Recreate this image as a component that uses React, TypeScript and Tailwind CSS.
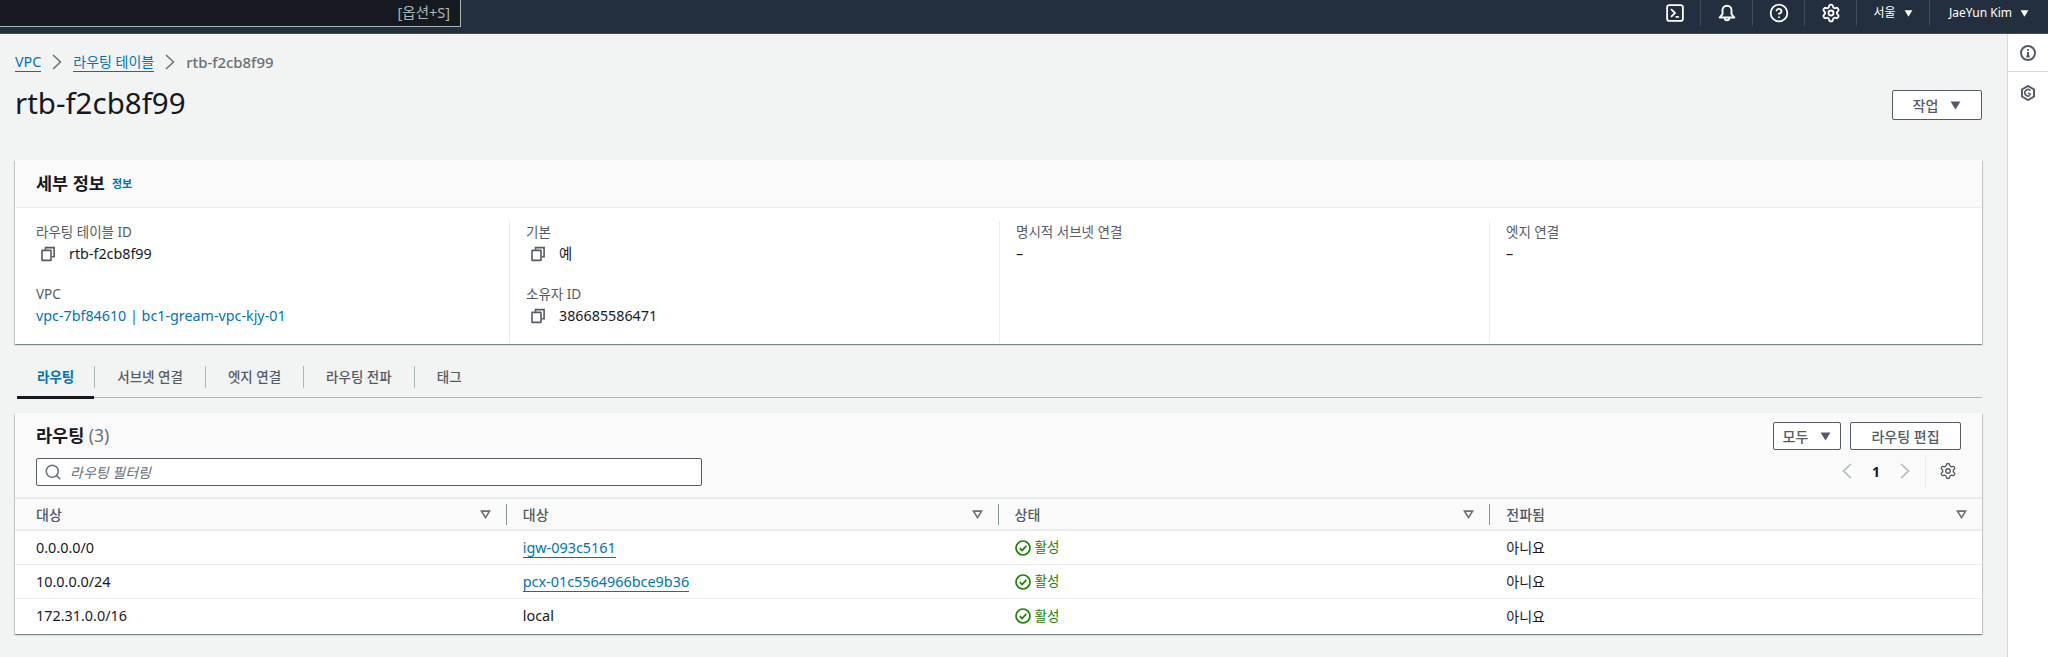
import React from 'react';
import { CircleHelp, Search, Settings } from 'lucide-react';

const Caret = ({ className }: { className: string }) => (
  <svg viewBox="0 0 12 10" className={className} fill="currentColor">
    <path d="M0.5 0.5h11L6 9.5z" />
  </svg>
);

const SortCaret = () => (
  <svg viewBox="0 0 12 10" className="w-[11px] h-[9px] text-[#687078]" fill="none" stroke="currentColor" strokeWidth="1.8">
    <path d="M1.5 1.2h9L6 8.4z" />
  </svg>
);

const Chevron = ({ left, className }: { left?: boolean; className: string }) => (
  <svg viewBox="0 0 10 16" className={className} fill="none" stroke="currentColor" strokeWidth="1.5">
    <path d={left ? 'M9 1L1.5 8 9 15' : 'M1 1l7.5 7L1 15'} />
  </svg>
);

const CopyIcon = () => (
  <svg viewBox="0 0 16 16" className="w-4 h-4 text-[#545b64]" fill="none" stroke="currentColor" strokeWidth="1.6">
    <path d="M5.5 3.8V1.6h8.6v9.2h-2.2" />
    <rect x="2" y="4.4" width="9" height="10" rx="0.5" />
  </svg>
);

const CheckIcon = () => (
  <svg viewBox="0 0 16 16" className="w-4 h-4 shrink-0" fill="none" stroke="currentColor" strokeWidth="1.7">
    <circle cx="8" cy="8" r="7" />
    <path d="M4.8 8.2l2.3 2.3 4.2-4.6" />
  </svg>
);

const Field = ({ label, children }: { label: string; children: React.ReactNode }) => (
  <div className="h-[62px]">
    <div className="text-[13.5px] leading-[22px] text-[#545b64]">{label}</div>
    <div className="text-[14.3px] leading-[22px] text-[#16191f]">{children}</div>
  </div>
);

const Copyable = ({ value }: { value: string }) => (
  <div className="flex items-center gap-[13px] pl-[4px]">
    <CopyIcon />
    <span>{value}</span>
  </div>
);

const NavIcon = ({ children }: { children: React.ReactNode }) => (
  <div className="h-[26px] w-[52px] flex items-center justify-center border-r border-[#414d5c] text-white">{children}</div>
);

const tabs = ['라우팅', '서브넷 연결', '엣지 연결', '라우팅 전파', '태그'];
const columns = ['대상', '대상', '상태', '전파됨'];
const routes = [
  { cidr: '0.0.0.0/0', target: 'igw-093c5161', link: true },
  { cidr: '10.0.0.0/24', target: 'pcx-01c5564966bce9b36', link: true },
  { cidr: '172.31.0.0/16', target: 'local', link: false },
];

export default function App() {
  return (
    <div className="w-[2048px] h-[657px] overflow-hidden flex flex-col bg-[#f2f3f3] text-[#16191f] font-['Noto_Sans','Noto_Sans_CJK_KR',sans-serif]">
      {/* top nav */}
      <div className="h-[34px] shrink-0 bg-[#232f3e] border-b border-[#414d5c] flex items-start justify-between">
        <div className="w-[461px] h-[27px] bg-[#16191f] border-r border-b border-[#aab7b8] flex items-center justify-end pr-[10px] text-[14.5px] text-[#aab7b8]">
          [옵션+S]
        </div>
        <div className="flex items-center h-[26px] pr-[19px]">
          <NavIcon>
            <svg viewBox="0 0 16 16" className="w-[18px] h-[18px]" fill="none" stroke="currentColor" strokeWidth="1.6">
              <rect x="1" y="1" width="14" height="14" rx="2" />
              <path d="M4.5 4.5L8 8l-3.5 3.5M8.5 11.5h3" />
            </svg>
          </NavIcon>
          <NavIcon>
            <svg viewBox="0 0 16 16" className="w-[18px] h-[18px]" fill="none" stroke="currentColor" strokeWidth="1.7">
              <path d="M1.5 12L4 9V5.5a4 4 0 018 0V9l2.5 3z" strokeLinejoin="round" />
              <path d="M6 12.5a2 2 0 004 0" />
            </svg>
          </NavIcon>
          <NavIcon><CircleHelp size={20} strokeWidth={2.2} /></NavIcon>
          <NavIcon><Settings size={20} strokeWidth={2.2} /></NavIcon>
          <div className="h-[26px] w-[73px] flex items-center justify-center gap-[8px] border-r border-[#414d5c] text-[12px] text-white">
            <span>서울</span>
            <Caret className="w-[9px] h-[7px]" />
          </div>
          <div className="h-[26px] flex items-center gap-[8px] pl-[19px] text-[12px] text-white">
            <span>JaeYun Kim</span>
            <Caret className="w-[9px] h-[7px]" />
          </div>
        </div>
      </div>

      <div className="flex-1 flex min-h-0">
        <div className="flex-1 min-w-0 pl-[15px] pr-[25px]">
          {/* breadcrumb */}
          <div className="flex items-center h-[20px] mt-[18px] text-[14.3px]">
            <span className="text-[#0073bb] border-b border-[#0073bb] leading-[18px]">VPC</span>
            <Chevron className="w-[10px] h-[16px] mx-[11px] text-[#687078]" />
            <span className="text-[14px] text-[#0073bb] border-b border-[#0073bb] leading-[18px]">라우팅 테이블</span>
            <Chevron className="w-[10px] h-[16px] mx-[11px] text-[#687078]" />
            <span className="text-[14.9px] text-[#687078] font-medium">rtb-f2cb8f99</span>
          </div>

          {/* page title */}
          <div className="flex items-start justify-between mt-[13px] h-[75px]">
            <h1 className="text-[29.5px] leading-[36px] font-normal">rtb-f2cb8f99</h1>
            <button className="w-[90px] h-[30px] mt-[5px] bg-white border border-[#545b64] rounded-[2px] flex items-center justify-center gap-[12px] text-[14px] font-medium text-[#545b64]">
              <span>작업</span>
              <Caret className="w-[11px] h-[9px]" />
            </button>
          </div>

          {/* details card */}
          <div className="bg-white shadow-[0_1px_1px_0_rgba(0,28,36,0.3),1px_1px_1px_0_rgba(0,28,36,0.15),-1px_1px_1px_0_rgba(0,28,36,0.15)] h-[184px]">
            <div className="h-[48px] bg-[#fafafa] border-b border-[#eaeded] flex items-center pl-[21px] gap-[7px]">
              <h2 className="text-[17.5px] font-bold">세부 정보</h2>
              <span className="text-[11px] font-bold text-[#0073bb] mt-[2px]">정보</span>
            </div>
            <div className="flex pl-[21px] pt-[13px]">
              <div className="w-[473px]">
                <Field label="라우팅 테이블 ID"><Copyable value="rtb-f2cb8f99" /></Field>
                <Field label="VPC"><span className="text-[#0073bb]">vpc-7bf84610 | bc1-gream-vpc-kjy-01</span></Field>
              </div>
              <div className="w-[490px] border-l border-[#eaeded] pl-[16px] h-[122px]">
                <Field label="기본"><Copyable value="예" /></Field>
                <Field label="소유자 ID"><Copyable value="386685586471" /></Field>
              </div>
              <div className="w-[490px] border-l border-[#eaeded] pl-[16px] h-[122px]">
                <Field label="명시적 서브넷 연결">–</Field>
              </div>
              <div className="flex-1 border-l border-[#eaeded] pl-[16px] h-[122px]">
                <Field label="엣지 연결">–</Field>
              </div>
            </div>
          </div>

          {/* tabs */}
          <div className="flex items-start mt-[18px] h-[36px] border-b border-[#aab7b8] ml-[2px]">
            {tabs.map((tab, i) => (
              <div key={tab} className={i === 0 ? 'relative h-[36px] px-[20px] text-[13.5px] font-bold text-[#0073bb] flex items-start' : 'h-[36px] text-[13.5px] font-medium text-[#545b64] flex items-start'}>
                {i === 0 ? (
                  <>
                    <span className="leading-[22px] mt-[4px]">{tab}</span>
                    <div className="absolute left-0 right-0 bottom-[-1px] h-[3px] bg-[#16191f]" />
                  </>
                ) : (
                  <span className="border-l border-[#aab7b8] h-[22px] leading-[22px] mt-[4px] px-[22px]">{tab}</span>
                )}
              </div>
            ))}
          </div>

          {/* routes card */}
          <div className="mt-[15px] bg-white h-[221px] shadow-[0_1px_1px_0_rgba(0,28,36,0.3),1px_1px_1px_0_rgba(0,28,36,0.15),-1px_1px_1px_0_rgba(0,28,36,0.15)]">
            <div className="h-[84px] bg-[#fafafa] flex justify-between pl-[21px] pr-[21px]">
              <div className="w-[666px]">
                <div className="text-[17.5px] font-bold leading-[24px] mt-[10px]">
                  라우팅 <span className="font-normal text-[#687078]">(3)</span>
                </div>
                <div className="mt-[11px] h-[28px] bg-white border border-[#545b64] rounded-[2px] flex items-center pl-[7px] gap-[8px]">
                  <Search size={18} className="text-[#687078]" />
                  <span className="text-[14px] italic text-[#687078]">라우팅 필터링</span>
                </div>
              </div>
              <div className="flex flex-col items-end pt-[9px]">
                <div className="flex gap-[9px]">
                  <button className="w-[68px] h-[28px] bg-white border border-[#545b64] rounded-[2px] flex items-center justify-center gap-[12px] text-[14px] font-medium text-[#545b64]">
                    <span>모두</span>
                    <Caret className="w-[11px] h-[9px]" />
                  </button>
                  <button className="w-[111px] h-[28px] bg-white border border-[#545b64] rounded-[2px] text-[14px] font-medium text-[#545b64]">라우팅 편집</button>
                </div>
                <div className="flex items-center h-[32px] mt-[5px]">
                  <Chevron left className="w-[10px] h-[16px] text-[#aab7b8]" />
                  <span className="w-[48px] text-center text-[14px] font-bold">1</span>
                  <Chevron className="w-[10px] h-[16px] text-[#aab7b8]" />
                  <div className="ml-[15px] pl-[13px] h-[32px] border-l border-[#eaeded] flex items-center pr-[4px]">
                    <Settings size={18} strokeWidth={1.8} className="text-[#545b64]" />
                  </div>
                </div>
              </div>
            </div>

            {/* table */}
            <div className="grid grid-cols-4 h-[34px] bg-[#fafafa] border-t-2 border-b-2 border-[#eaeded] items-center text-[14px] font-medium text-[#545b64]">
              {columns.map((col, i) => (
                <div key={i} className={i === 0 ? 'pl-[21px] flex items-center justify-between' : 'pl-[16px] flex items-center justify-between'}>
                  <span>{col}</span>
                  <div className={i === 3 ? 'flex items-center pr-[15px]' : 'flex items-center gap-[15px]'}>
                    <SortCaret />
                    {i < 3 && <div className="w-[1px] h-[21px] bg-[#879596]" />}
                  </div>
                </div>
              ))}
            </div>
            {routes.map((route, i) => (
              <div key={route.cidr} className={i < 2 ? 'grid grid-cols-4 h-[34px] items-center text-[14.4px] border-b border-[#eaeded]' : 'grid grid-cols-4 h-[34px] items-center text-[14.4px]'}>
                <div className="pl-[21px]">{route.cidr}</div>
                <div className="pl-[16px]">
                  {route.link ? <span className="text-[#0073bb] border-b border-[#0073bb]">{route.target}</span> : route.target}
                </div>
                <div className="pl-[16px] flex items-center gap-[4px] text-[#1d8102]">
                  <CheckIcon />
                  <span className="text-[13.5px]">활성</span>
                </div>
                <div className="pl-[16px] text-[14px]">아니요</div>
              </div>
            ))}
          </div>
        </div>

        {/* right rail */}
        <div className="w-[41px] shrink-0 bg-white border-l border-[#d5dbdb]">
          <div className="h-[38px] border-b border-[#d5dbdb] flex items-center justify-center">
            <svg viewBox="0 0 16 16" className="w-4 h-4 text-[#545b64]" fill="none" stroke="currentColor" strokeWidth="2">
              <circle cx="8" cy="8" r="7" />
              <path d="M8 7v4.5M6.3 11.5h3.4M8 4v1.8" />
            </svg>
          </div>
          <div className="h-[42px] flex items-center justify-center">
            <svg viewBox="0 0 16 16" className="w-4 h-4 text-[#545b64]" fill="none" stroke="currentColor" strokeWidth="2">
              <path d="M8 1l6 3.5v7L8 15l-6-3.5v-7z" />
              <path d="M10.5 5.8a3.2 3.2 0 10-0.6 4.6" strokeWidth="1.6" />
              <path d="M8 8l3 1.6" strokeWidth="1.6" />
            </svg>
          </div>
        </div>
      </div>
    </div>
  );
}
